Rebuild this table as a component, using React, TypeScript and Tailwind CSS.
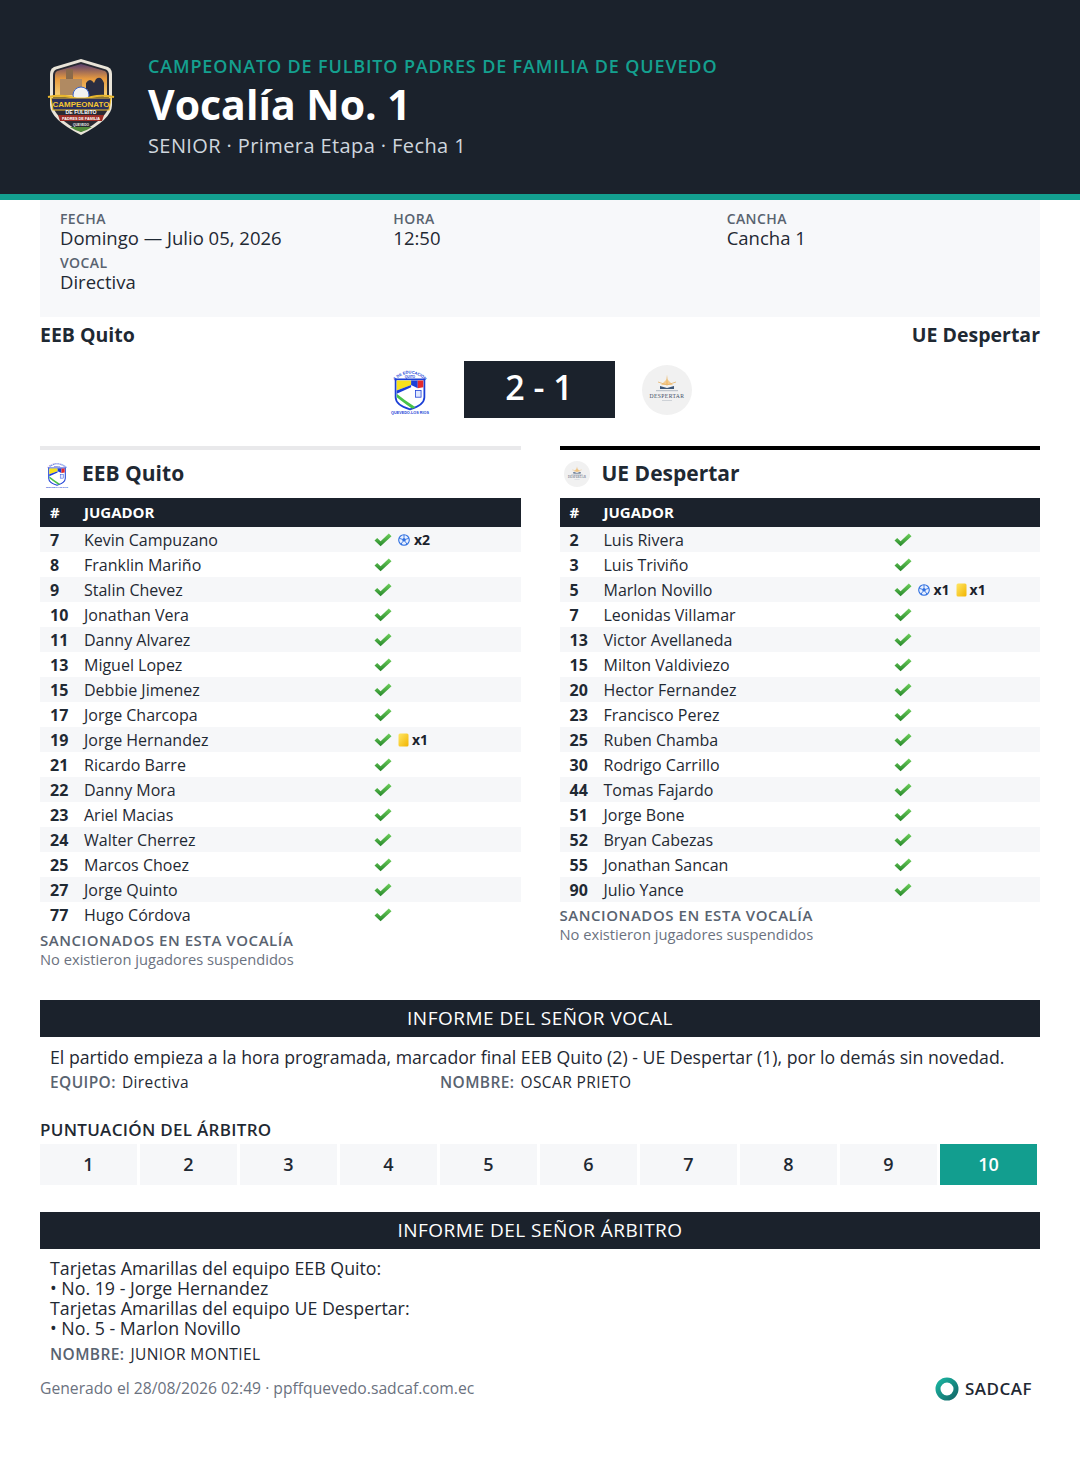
import React from "react";

type Ev = { goals?: number; yellow?: number };
type P = { n: number; name: string; ev?: Ev };

const left: P[] = [
  { n: 7, name: "Kevin Campuzano", ev: { goals: 2 } },
  { n: 8, name: "Franklin Mariño" },
  { n: 9, name: "Stalin Chevez" },
  { n: 10, name: "Jonathan Vera" },
  { n: 11, name: "Danny Alvarez" },
  { n: 13, name: "Miguel Lopez" },
  { n: 15, name: "Debbie Jimenez" },
  { n: 17, name: "Jorge Charcopa" },
  { n: 19, name: "Jorge Hernandez", ev: { yellow: 1 } },
  { n: 21, name: "Ricardo Barre" },
  { n: 22, name: "Danny Mora" },
  { n: 23, name: "Ariel Macias" },
  { n: 24, name: "Walter Cherrez" },
  { n: 25, name: "Marcos Choez" },
  { n: 27, name: "Jorge Quinto" },
  { n: 77, name: "Hugo Córdova" },
];

const right: P[] = [
  { n: 2, name: "Luis Rivera" },
  { n: 3, name: "Luis Triviño" },
  { n: 5, name: "Marlon Novillo", ev: { goals: 1, yellow: 1 } },
  { n: 7, name: "Leonidas Villamar" },
  { n: 13, name: "Victor Avellaneda" },
  { n: 15, name: "Milton Valdiviezo" },
  { n: 20, name: "Hector Fernandez" },
  { n: 23, name: "Francisco Perez" },
  { n: 25, name: "Ruben Chamba" },
  { n: 30, name: "Rodrigo Carrillo" },
  { n: 44, name: "Tomas Fajardo" },
  { n: 51, name: "Jorge Bone" },
  { n: 52, name: "Bryan Cabezas" },
  { n: 55, name: "Jonathan Sancan" },
  { n: 90, name: "Julio Yance" },
];

function Check() {
  return (
    <svg width="18" height="14" viewBox="0 0 18 14" className="shrink-0">
      <defs>
        <linearGradient id="chk" x1="0" y1="0" x2="0" y2="1">
          <stop offset="0" stopColor="#6fd05c" />
          <stop offset="1" stopColor="#25862a" />
        </linearGradient>
      </defs>
      <path d="M0.5 7.6 L3.2 5 L6.6 8.2 L14.8 0.6 L17.5 3.2 L6.6 13.2 Z" fill="url(#chk)" />
    </svg>
  );
}

function Ball() {
  return (
    <svg width="12" height="12" viewBox="0 0 12 12" className="shrink-0">
      <circle cx="6" cy="6" r="5.3" fill="#eaf1ff" stroke="#2f6fe0" strokeWidth="1.1" />
      <path d="M6 3.8 L8 5.2 L7.3 7.5 L4.7 7.5 L4 5.2 Z" fill="#2f6fe0" />
      <path d="M6 3.8 V1 M8 5.2 L10.8 4.3 M7.3 7.5 L8.8 10 M4.7 7.5 L3.2 10 M4 5.2 L1.2 4.3" stroke="#2f6fe0" strokeWidth="0.9" />
    </svg>
  );
}

function Card() {
  return (
    <svg width="11" height="14" viewBox="0 0 11 14" className="shrink-0">
      <defs>
        <linearGradient id="yc" x1="0" y1="0" x2="1" y2="1">
          <stop offset="0" stopColor="#ffe766" />
          <stop offset="1" stopColor="#f2b400" />
        </linearGradient>
      </defs>
      <rect x="0.5" y="0.5" width="10" height="13" rx="1.5" fill="url(#yc)" />
    </svg>
  );
}

function HeaderLogo() {
  return (
    <svg width="70" height="80" viewBox="0 0 70 80">
      <defs>
        <linearGradient id="sky" x1="0" y1="0" x2="0" y2="1">
          <stop offset="0" stopColor="#5b3f6e" />
          <stop offset="0.45" stopColor="#e79a3f" />
          <stop offset="1" stopColor="#f7d37a" />
        </linearGradient>
      </defs>
      <path d="M35 2 L62 10 Q66 12 66 17 L66 48 Q66 62 35 78 Q4 62 4 48 L4 17 Q4 12 8 10 Z" fill="#e9e4d8" />
      <path d="M35 5 L60 12.5 Q63 14 63 18 L63 47 Q63 60 35 75 Q7 60 7 47 L7 18 Q7 14 10 12.5 Z" fill="#2a2a33" />
      <path d="M35 7 L59 14 Q61 15 61 18 L61 40 L9 40 L9 18 Q9 15 11 14 Z" fill="url(#sky)" />
      <rect x="20" y="12" width="7" height="22" fill="#8a6a4a" />
      <rect x="14" y="22" width="22" height="16" fill="#b08a62" />
      <path d="M40 40 L40 26 Q44 20 48 26 L50 22 Q55 18 58 26 L58 40 Z" fill="#2b2d40" />
      <circle cx="35" cy="38" r="8" fill="#f2f2f2" stroke="#3a64c8" strokeWidth="1" />
      <path d="M2 40 Q20 36 35 44 Q50 36 68 40" stroke="#e7b52c" strokeWidth="2" fill="none" />
      <path d="M5 41 L65 41 L63 53 L7 53 Z" fill="#2a2f5a" stroke="#f2c230" strokeWidth="1.2" />
      <text x="35" y="49.5" textAnchor="middle" fontSize="8" fontWeight="900" fill="#f5c531" fontFamily="Liberation Sans, sans-serif">CAMPEONATO</text>
      <text x="35" y="57" textAnchor="middle" fontSize="5.2" fontWeight="900" fill="#ffffff" fontFamily="Liberation Sans, sans-serif">DE FULBITO</text>
      <path d="M12 58 L58 58 L56 64 L14 64 Z" fill="#9b2d25" />
      <text x="35" y="62.6" textAnchor="middle" fontSize="3.8" fontWeight="700" fill="#ffffff" fontFamily="Liberation Sans, sans-serif">PADRES DE FAMILIA</text>
      <text x="35" y="68.5" textAnchor="middle" fontSize="3.2" fontWeight="700" fill="#f0f0f0" fontFamily="Liberation Sans, sans-serif">QUEVEDO</text>
      <path d="M24 70 L46 70 Q40 74 35 75 Q30 74 24 70 Z" fill="#4f8a3a" />
    </svg>
  );
}

function QuitoLogo({ w, h, id }: { w: number; h: number; id: string }) {
  return (
    <svg width={w} height={h} viewBox="7 3 36 47">
      <path id={id} d="M11 18 Q25 5 39 18" fill="none" />
      <text fontSize="3.6" fontWeight="900" fill="#1b3fd6" fontFamily="Liberation Sans, sans-serif">
        <textPath href={`#${id}`} startOffset="50%" textAnchor="middle">ESCUELA DE EDUCACION BASICA</textPath>
      </text>
      <text x="25" y="15.8" textAnchor="middle" fontSize="3" fontWeight="900" fill="#1b3fd6" fontFamily="Liberation Sans, sans-serif">QUITO</text>
      <path d="M12 17 L38 17 L38 33 Q38 40 25 44 Q12 40 12 33 Z" fill="#ffffff" stroke="#1b3fd6" strokeWidth="1.6" />
      <path d="M13 18 L26 18 L26 22 L13 27 Z" fill="#f7e21b" />
      <path d="M26 18 L32 18 L32 25 L26 22 Z" fill="#1b3fd6" />
      <path d="M32 18 L37 18 L37 24 L32 25 Z" fill="#e52a2a" />
      <path d="M13 27 L26 22 L26 24 L13 30 Z" fill="#1b3fd6" />
      <path d="M13 30 Q20 36 30 42 L27 43.5 Q18 37 13 33 Z" fill="#49c24a" />
      <rect x="30" y="27" width="5" height="6" fill="#dfe7ff" stroke="#1b3fd6" strokeWidth="0.7" />
      <text x="25" y="48.5" textAnchor="middle" fontSize="3.4" fontWeight="900" fill="#1b3fd6" fontFamily="Liberation Sans, sans-serif">QUEVEDO-LOS RIOS</text>
    </svg>
  );
}

function DespertarLogo({ size }: { size: number }) {
  return (
    <svg width={size} height={size} viewBox="0 0 50 50">
      <circle cx="25" cy="25" r="25" fill="#f1f1f1" />
      <path d="M25 10 L26 20 L24 20 Z" fill="#e7a94a" />
      <path d="M25 14 L31 20 L19 20 Z" fill="#f3c27a" opacity="0.8" />
      <path d="M16 17 L25 20 L34 17" stroke="#e7b46a" strokeWidth="0.8" fill="none" />
      <path d="M18 21 L25 23 L32 21 L32 24 L18 24 Z" fill="#3d5677" />
      <rect x="14" y="25.5" width="22" height="0.6" fill="#8a97a8" />
      <text x="25" y="33" textAnchor="middle" fontSize="5.6" fill="#3d4e66" fontFamily="Liberation Serif, serif" letterSpacing="0.4">DESPERTAR</text>
      <rect x="20" y="35.5" width="10" height="0.5" fill="#aab2bd" />
    </svg>
  );
}

function Events({ ev }: { ev?: Ev }) {
  return (
    <div className="flex items-center">
      <Check />
      {ev?.goals ? (
        <span className="ml-[6px] flex items-center gap-[4px]">
          <Ball />
          <span className="text-[14px] font-bold text-[#1b222c]">x{ev.goals}</span>
        </span>
      ) : null}
      {ev?.yellow ? (
        <span className="ml-[6px] flex items-center gap-[3px]">
          <Card />
          <span className="text-[14px] font-bold text-[#1b222c]">x{ev.yellow}</span>
        </span>
      ) : null}
    </div>
  );
}

function TeamTable({ name, players, borderCls, logo }: { name: string; players: P[]; borderCls: string; logo: React.ReactNode }) {
  return (
    <div>
      <div className={`h-1 ${borderCls}`} />
      <div className="flex h-[48px] items-center gap-[12px] pl-1">
        <div className="flex h-[28px] w-[26px] items-center justify-center">{logo}</div>
        <div className="text-[21px] font-bold text-[#1f2933]">{name}</div>
      </div>
      <div className="flex h-[29px] items-center bg-[#1b222c] text-[15px] font-bold uppercase text-white">
        <div className="w-[44px] pl-[10px]">#</div>
        <div>JUGADOR</div>
      </div>
      {players.map((p, i) => (
        <div key={p.n} className={`flex h-[25px] items-center text-[16px] ${i % 2 === 0 ? "bg-[#f6f7f9]" : "bg-white"}`}>
          <div className="w-[44px] pl-[10px] font-bold text-[#1f2933]">{p.n}</div>
          <div className="w-[290px] text-[#1f2933]">{p.name}</div>
          <Events ev={p.ev} />
        </div>
      ))}
      <div className="mt-[3px] text-[15px] font-semibold uppercase leading-[20px] tracking-[0.55px] text-[#596370]">SANCIONADOS EN ESTA VOCALÍA</div>
      <div className="text-[14.7px] leading-[18px] text-[#6b7280]">No existieron jugadores suspendidos</div>
    </div>
  );
}

function Label({ children }: { children: React.ReactNode }) {
  return <div className="text-[14px] font-semibold uppercase leading-[16px] tracking-[0.4px] text-[#596370]">{children}</div>;
}

export default function App() {
  return (
    <div className="min-h-[1469px] w-[1080px] bg-white font-['Open_Sans',sans-serif] text-[#1f2933]">
      <div className="flex h-[194px] items-center bg-[#1b222c] pl-[46px]">
        <HeaderLogo />
        <div className="ml-[32px] flex flex-col pt-[22px]">
          <div className="text-[18px] font-semibold leading-[22px] tracking-[0.85px] text-[#14a08f]">CAMPEONATO DE FULBITO PADRES DE FAMILIA DE QUEVEDO</div>
          <div className="mt-[2px] text-[41px] font-bold leading-[50px] text-white">Vocalía No. 1</div>
          <div className="mt-[2px] text-[20px] leading-[30px] tracking-[0.4px] text-[#cfd6de]">SENIOR · Primera Etapa · Fecha 1</div>
        </div>
      </div>
      <div className="h-[6px] bg-[#13a090]" />

      <div className="px-10">
        <div className="grid grid-cols-3 gap-y-[6px] bg-[#f7f8fa] pb-[24px] pt-[11px]">
          <div className="pl-5">
            <Label>FECHA</Label>
            <div className="text-[18.5px] leading-[22px]">Domingo — Julio 05, 2026</div>
          </div>
          <div className="pl-5">
            <Label>HORA</Label>
            <div className="text-[18.5px] leading-[22px]">12:50</div>
          </div>
          <div className="pl-5">
            <Label>CANCHA</Label>
            <div className="text-[18.5px] leading-[22px]">Cancha 1</div>
          </div>
          <div className="pl-5">
            <Label>VOCAL</Label>
            <div className="text-[18.5px] leading-[22px]">Directiva</div>
          </div>
        </div>

        <div className="mt-[6px] flex justify-between text-[19.5px] font-bold leading-[24px]">
          <div>EEB Quito</div>
          <div>UE Despertar</div>
        </div>

        <div className="mt-[14px] flex items-center justify-center">
          <div className="mr-[33px]"><QuitoLogo w={42} h={52} id="arcA" /></div>
          <div className="flex h-[57px] w-[151px] items-center justify-center bg-[#1b222c] pb-[4px] text-[34px] font-semibold text-white">2 - 1</div>
          <div className="ml-[27px]"><DespertarLogo size={50} /></div>
        </div>

        <div className="mt-[28px] grid grid-cols-2 gap-x-[39px]">
          <TeamTable name="EEB Quito" players={left} borderCls="bg-[#e9e9eb]" logo={<QuitoLogo w={24} h={30} id="arcB" />} />
          <TeamTable name="UE Despertar" players={right} borderCls="bg-black" logo={<DespertarLogo size={28} />} />
        </div>

        <div className="mt-[32px] flex h-[37px] items-center justify-center bg-[#1b222c] text-[19px] font-medium uppercase tracking-[0.5px] text-white">INFORME DEL SEÑOR VOCAL</div>
        <div className="px-[10px] pt-[9px]">
          <div className="text-[17.7px] leading-[22px]">El partido empieza a la hora programada, marcador final EEB Quito (2) - UE Despertar (1), por lo demás sin novedad.</div>
          <div className="mt-[4px] flex text-[15.5px] leading-[20px] tracking-[0.4px]">
            <div className="w-[390px]"><span className="mr-[6px] font-semibold text-[#596370]">EQUIPO:</span>Directiva</div>
            <div><span className="mr-[6px] font-semibold text-[#596370]">NOMBRE:</span>OSCAR PRIETO</div>
          </div>
        </div>

        <div className="mt-[27px] text-[17px] font-semibold leading-[22px] tracking-[0.3px]">PUNTUACIÓN DEL ÁRBITRO</div>
        <div className="mt-[3px] flex gap-[3px]">
          {[1, 2, 3, 4, 5, 6, 7, 8, 9, 10].map((n) => (
            <div key={n} className={`flex h-[41px] w-[97px] items-center justify-center text-[18px] font-semibold ${n === 10 ? "bg-[#129e8f] text-white" : "bg-[#f6f7f9] text-[#1f2933]"}`}>{n}</div>
          ))}
        </div>

        <div className="mt-[27px] flex h-[37px] items-center justify-center bg-[#1b222c] text-[19px] font-medium uppercase tracking-[0.5px] text-white">INFORME DEL SEÑOR ÁRBITRO</div>
        <div className="px-[10px] pt-[9px]">
          <div className="text-[17.8px] leading-[20px]">
            <div>Tarjetas Amarillas del equipo EEB Quito:</div>
            <div>• No. 19 - Jorge Hernandez</div>
            <div>Tarjetas Amarillas del equipo UE Despertar:</div>
            <div>• No. 5 - Marlon Novillo</div>
          </div>
          <div className="mt-[6px] text-[15.5px] leading-[20px] tracking-[0.4px]"><span className="mr-[6px] font-semibold text-[#596370]">NOMBRE:</span>JUNIOR MONTIEL</div>
        </div>

        <div className="mt-[12px] flex items-center justify-between">
          <div className="text-[15.7px] text-[#6b7280]">Generado el 28/08/2026 02:49 · ppffquevedo.sadcaf.com.ec</div>
          <div className="flex items-center gap-[6px] pr-[8px]">
            <svg width="24" height="24" viewBox="0 0 24 24">
              <defs>
                <linearGradient id="sd" x1="0" y1="0" x2="1" y2="1">
                  <stop offset="0" stopColor="#1bb3a0" />
                  <stop offset="1" stopColor="#136a6a" />
                </linearGradient>
              </defs>
              <circle cx="12" cy="12" r="9" fill="none" stroke="url(#sd)" strokeWidth="5" />
            </svg>
            <div className="text-[17px] font-semibold tracking-[0.5px] text-[#1f2933]">SADCAF</div>
          </div>
        </div>
      </div>
    </div>
  );
}
